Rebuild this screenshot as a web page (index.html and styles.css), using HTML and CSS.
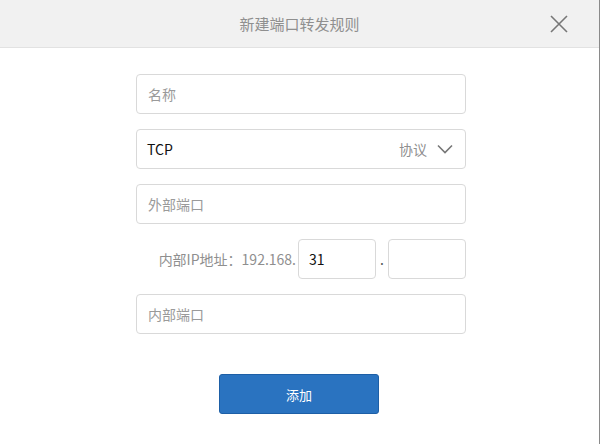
FILE: index.html
```html
<!DOCTYPE html>
<html lang="zh-CN">
<head>
    <meta charset="UTF-8">
    <title>新建端口转发规则</title>
    <link rel="stylesheet" href="styles.css">
</head>
<body>
    <div class="dialog">
        <div class="dialog-header">
            <span class="dialog-title">新建端口转发规则</span>
            <span class="close-btn">
                <svg width="18" height="18" viewBox="0 0 18 18">
                    <path d="M1 1 L17 17 M17 1 L1 17" stroke="#777" stroke-width="1.6" fill="none"/>
                </svg>
            </span>
        </div>

        <form class="rule-form">
            <div class="field">
                <input type="text" placeholder="名称">
            </div>

            <div class="field select-field">
                <span class="select-value">TCP</span>
                <span class="select-hint">协议</span>
                <svg class="chevron" width="16" height="10" viewBox="0 0 16 10">
                    <path d="M1 1.5 L8 8.5 L15 1.5" stroke="#777" stroke-width="1.6" fill="none"/>
                </svg>
            </div>

            <div class="field">
                <input type="text" placeholder="外部端口">
            </div>

            <div class="ip-row">
                <span class="ip-label">内部IP地址：192.168.</span>
                <input type="text" class="ip-part" value="31">
                <span class="ip-dot">.</span>
                <input type="text" class="ip-part" value="">
            </div>

            <div class="field">
                <input type="text" placeholder="内部端口">
            </div>

            <div class="actions">
                <button type="button" class="btn-add">添加</button>
            </div>
        </form>
    </div>
</body>
</html>
```

FILE: styles.css
```css
body {
    margin: 0;
    font-family: "Noto Sans CJK SC", "Noto Sans", sans-serif;
    background: white;
}

.dialog {
    width: 599px;
    height: 444px;
    border-right: 1px solid #8a8a8a;
    background: white;
}

.dialog-header {
    height: 47px;
    background: #f1f1f1;
    border-bottom: 1px solid #e2e2e2;
    display: flex;
    align-items: center;
    justify-content: center;
    position: relative;
}

.dialog-title {
    color: #8f8f8f;
    font-size: 15px;
}

.close-btn {
    position: absolute;
    right: 31px;
    top: 15px;
    display: flex;
}

.rule-form {
    width: 330px;
    margin: 26px 0 0 136px;
    display: flex;
    flex-direction: column;
    gap: 15px;
}

.field {
    height: 40px;
}

.field input,
.ip-part {
    box-sizing: border-box;
    width: 100%;
    height: 40px;
    border: 1px solid #d9d9d9;
    border-radius: 4px;
    padding: 0 11px;
    font-family: inherit;
    font-size: 14px;
    color: #111;
    outline: none;
}

.field input::placeholder {
    color: #9a9a9a;
}

.select-field {
    box-sizing: border-box;
    border: 1px solid #d9d9d9;
    border-radius: 4px;
    display: flex;
    align-items: center;
    padding: 0 12px 0 10px;
    font-size: 14px;
}

.select-value {
    color: #111;
    flex: 1;
}

.select-hint {
    color: #8f8f8f;
    margin-right: 10px;
}

.ip-row {
    display: flex;
    align-items: center;
    height: 40px;
}

.ip-label {
    flex: 1;
    text-align: right;
    color: #8f8f8f;
    font-size: 14px;
    padding-right: 2px;
}

.ip-part {
    width: 78px;
    padding: 0 10px;
}

.ip-dot {
    width: 12px;
    text-align: center;
    color: #555;
    font-size: 14px;
}

.actions {
    display: flex;
    margin-top: 25px;
    padding-left: 83px;
}

.btn-add {
    width: 160px;
    height: 40px;
    background: #2a73c0;
    border: 1px solid #1d5fa6;
    border-radius: 3px;
    color: white;
    font-family: inherit;
    font-size: 13px;
    cursor: pointer;
}
```
